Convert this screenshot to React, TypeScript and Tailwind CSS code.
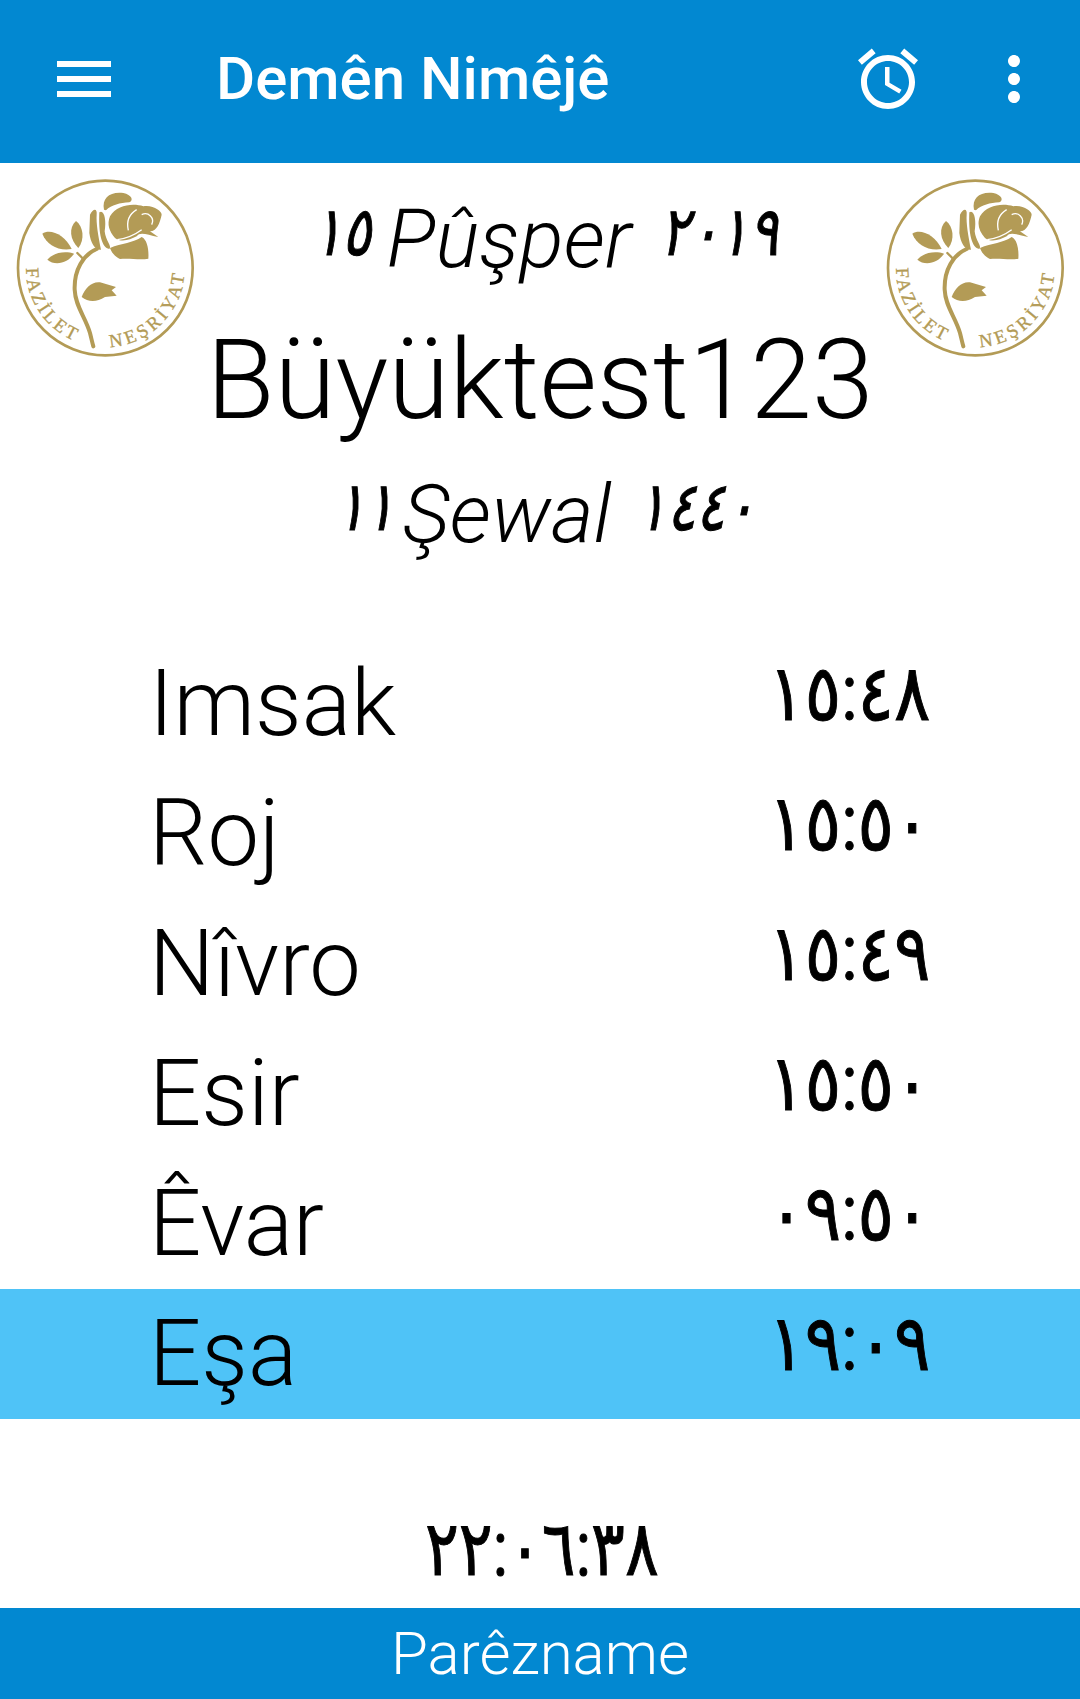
import React from 'react';

const prayerTimes = [
  { name: 'Imsak', time: '١٥:٤٨', active: false },
  { name: 'Roj', time: '١٥:٥٠', active: false },
  { name: 'Nîvro', time: '١٥:٤٩', active: false },
  { name: 'Esir', time: '١٥:٥٠', active: false },
  { name: 'Êvar', time: '٠٩:٥٠', active: false },
  { name: 'Eşa', time: '١٩:٠٩', active: true },
];

function MenuIcon() {
  return (
    <svg viewBox="0 0 24 24" className="w-[72px] h-[72px] fill-white">
      <path d="M3 18h18v-2H3v2zm0-5h18v-2H3v2zm0-7v2h18V6H3z" />
    </svg>
  );
}

function AlarmIcon() {
  return (
    <svg viewBox="0 0 24 24" className="w-[72px] h-[72px] fill-white">
      <path d="M22 5.72l-4.6-3.86-1.29 1.53 4.6 3.86L22 5.72zM7.88 3.39L6.6 1.86 2 5.71l1.29 1.53 4.59-3.85zM12.5 8H11v6l4.75 2.85.75-1.23-4-2.37V8zM12 4c-4.97 0-9 4.03-9 9s4.02 9 9 9c4.97 0 9-4.03 9-9s-4.03-9-9-9zm0 16c-3.87 0-7-3.13-7-7s3.13-7 7-7 7 3.13 7 7-3.13 7-7 7z" />
    </svg>
  );
}

function MoreIcon() {
  return (
    <svg viewBox="0 0 24 24" className="w-[72px] h-[72px] fill-white">
      <path d="M12 8c1.1 0 2-.9 2-2s-.9-2-2-2-2 .9-2 2 .9 2 2 2zm0 2c-1.1 0-2 .9-2 2s.9 2 2 2 2-.9 2-2-.9-2-2-2zm0 6c-1.1 0-2 .9-2 2s.9 2 2 2 2-.9 2-2-.9-2-2-2z" />
    </svg>
  );
}

// gold rose badge, coordinates follow a 3x crop of the logo
function RoseLogo({ id }: { id: string }) {
  return (
    <svg viewBox="45 55 540 540" className="w-[180px] h-[180px] shrink-0">
      <circle cx="316" cy="325" r="262" fill="none" stroke="#B39B56" strokeWidth="8" />
      <g fill="#B39B56">
        <path d="M312 150 C305 115 330 95 370 100 C395 105 402 122 388 128 C360 130 335 135 318 152 Z" />
        <path d="M270 165 C280 145 292 145 290 165 C288 190 295 230 303 270 C285 272 272 250 268 220 Z" />
        <path d="M298 158 C312 148 320 180 314 215 C317 245 337 260 328 268 C305 265 295 220 298 158 Z" />
        <path d="M330 170 C350 135 400 130 430 140 C460 135 485 155 485 165 C480 190 470 215 450 215 L475 232 C440 225 420 215 410 230 C390 240 365 250 345 235 C328 215 320 195 330 170 Z" />
        <path d="M330 265 C365 250 400 250 425 232 C442 240 447 270 445 297 C420 302 390 295 360 298 C345 290 335 280 330 265 Z" />
        <path d="M127 222 C150 205 195 225 215 268 C175 275 140 255 127 222 Z" />
        <path d="M228 184 C250 200 255 240 235 265 C210 240 205 205 228 184 Z" />
        <path d="M142 300 C165 275 200 275 222 282 C205 310 165 320 142 300 Z" />
        <path d="M245 412 C255 385 275 365 300 368 L348 382 L335 392 L350 408 L315 412 C290 428 265 428 245 412 Z" />
      </g>
      <g fill="none" stroke="#B39B56" strokeLinecap="round">
        <path d="M290 268 C250 285 222 330 224 390 C226 440 255 470 270 520 C275 540 277 550 280 560" strokeWidth="12" />
        <path d="M232 280 L250 298" strokeWidth="7" />
      </g>
      <g fill="none" stroke="#fff" strokeWidth="4">
        <path d="M410 150 C385 165 380 190 385 212" />
        <path d="M425 165 C445 155 465 175 455 195" />
        <path d="M352 240 C385 235 405 225 425 210" />
      </g>
      <path id={id} d="M78 325 A238 238 0 0 0 554 325" fill="none" />
      <text fill="#B39B56" stroke="#B39B56" strokeWidth="1" fontFamily="'Liberation Serif', serif" fontSize="56">
        <textPath href={`#${id}`} startOffset="0" textLength="276" lengthAdjust="spacing">FAZİLET</textPath>
      </text>
      <text fill="#B39B56" stroke="#B39B56" strokeWidth="1" fontFamily="'Liberation Serif', serif" fontSize="56">
        <textPath href={`#${id}`} startOffset="388" textLength="340" lengthAdjust="spacing">NEŞRİYAT</textPath>
      </text>
    </svg>
  );
}

// letter-spacing has no effect on these digits, so they are narrowed with a scale
function DateDigits({ children, className = '' }: { children: string; className?: string }) {
  return (
    <span className={`inline-block text-[68px] font-normal leading-none align-[12px] scale-x-[.8] [-webkit-text-stroke:1px_black] ${className}`}>
      {children}
    </span>
  );
}

export default function App() {
  return (
    <div className="flex flex-col w-[1080px] h-[1699px] bg-white text-black font-['Roboto','DejaVu_Sans',sans-serif]">

      {/* toolbar */}
      <header className="flex items-center h-[163px] pl-[48px] pr-[30px] pb-[5px] bg-[#0288D1] text-white shrink-0">
        <MenuIcon />
        <h1 className="ml-[96px] flex-1 text-[60px] font-medium">Demên Nimêjê</h1>
        <AlarmIcon />
        <div className="ml-[54px]"><MoreIcon /></div>
      </header>

      {/* dates and city */}
      <section className="flex items-start h-[405px] px-[15px] pt-[15px] font-light">
        <RoseLogo id="logo-left" />
        <div className="flex-1 flex flex-col items-center whitespace-pre">
          <div className="h-[122px] pl-[26px] text-[82px] italic leading-[122px]">
            <DateDigits className="origin-right mr-[-5px]">١٥</DateDigits> Pûşper  <DateDigits className="origin-left ml-[-11px]">٢٠١٩</DateDigits>
          </div>
          <div className="h-[160px] text-[111px] leading-[160px]">Büyüktest123</div>
          <div className="h-[108px] pl-[26px] text-[82px] italic leading-[108px]">
            <DateDigits className="origin-right mr-[-12px]">١١</DateDigits> Şewal <DateDigits className="origin-left ml-[6px]">١٤٤٠</DateDigits>
          </div>
        </div>
        <RoseLogo id="logo-right" />
      </section>

      {/* prayer times */}
      <section className="mt-[71px] flex flex-col font-light">
        {prayerTimes.map((row) => (
          <div
            key={row.name}
            className={`flex items-center justify-between h-[130px] pl-[149px] pr-[150px] text-[92px] ${row.active ? 'bg-[#4FC3F7]' : ''}`}
          >
            <span>{row.name}</span>
            <span className="pb-[20px] text-[78px] font-normal leading-none origin-right scale-x-[.87] [-webkit-text-stroke:1px_black]">{row.time}</span>
          </div>
        ))}
      </section>

      {/* countdown */}
      <div className="flex-1 flex items-center justify-center pt-[70px] pl-[4px] text-[76px] font-normal">
        <span className="scale-x-[.83] [-webkit-text-stroke:1px_black]">٢٢:٠٦:٣٨</span>
      </div>

      <footer className="flex items-center justify-center h-[91px] bg-[#0288D1] text-white text-[60px] font-light shrink-0">
        Parêzname
      </footer>
    </div>
  );
}
